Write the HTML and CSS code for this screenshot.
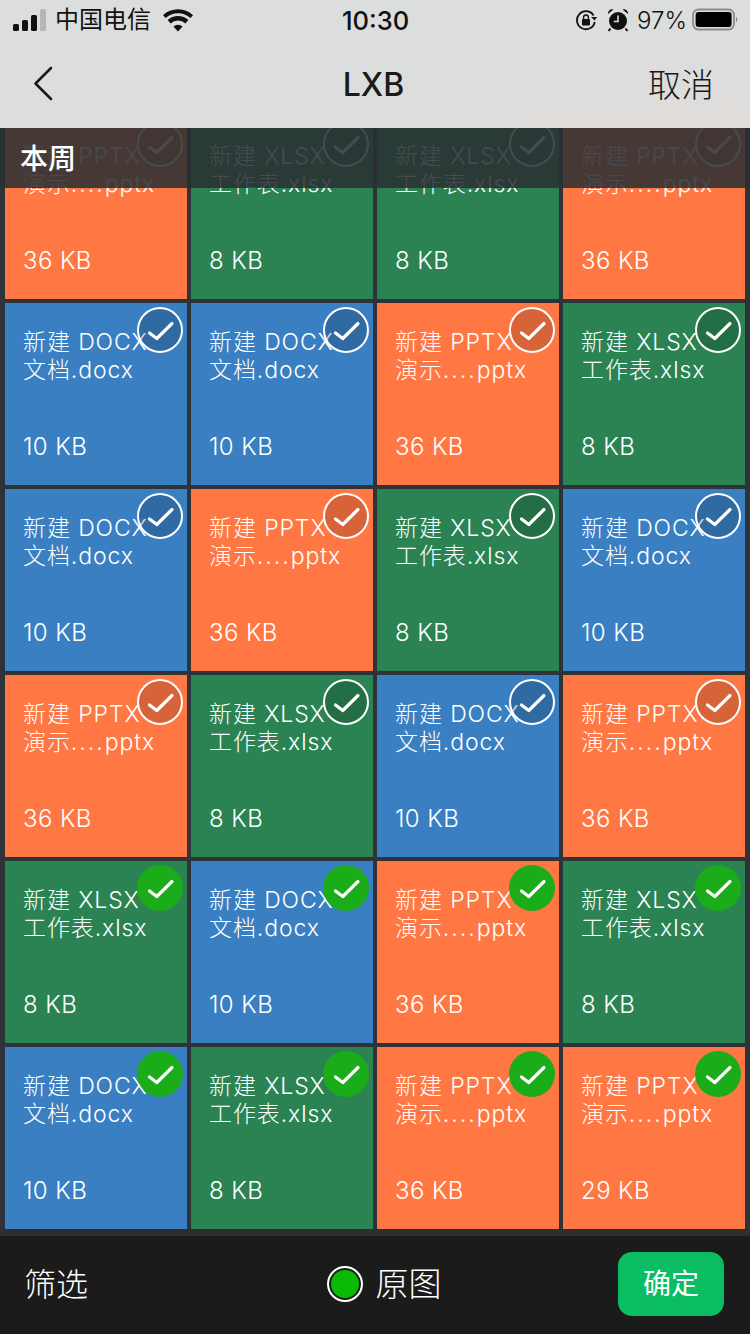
FILE: index.html
```html
<!DOCTYPE html>
<html lang="zh">
<head>
<meta charset="utf-8">
<title>LXB</title>
<link rel="stylesheet" href="styles.css">
</head>
<body>
<svg class="defs" width="0" height="0" aria-hidden="true">
  <symbol id="tick" viewBox="0 0 46 46"><path d="M12.5 26 L19.8 31.5 L35 16.5" fill="none" stroke="#fff" stroke-width="3.2" stroke-linecap="round" stroke-linejoin="round"/></symbol>
</svg>
<div class="page">
  <header class="top">
    <div class="status">
      <div class="status-left">
        <svg class="signal" width="34" height="22" viewBox="0 0 34 22"><rect x="0" y="15" width="6" height="7" rx="1.5" fill="#111"/><rect x="9" y="11" width="6" height="11" rx="1.5" fill="#111"/><rect x="18" y="6" width="6" height="16" rx="1.5" fill="#111"/><rect x="27" y="0" width="6" height="22" rx="1.5" fill="#b5b7b7"/></svg>
        <span class="carrier">中国电信</span>
        <svg class="wifi" width="30" height="23" viewBox="0 0 30 23"><path d="M15 22.5 L10.4 17.4 A7 7 0 0 1 19.6 17.4 Z M7.6 14.4 L4.6 11.1 A15.5 15.5 0 0 1 25.4 11.1 L22.4 14.4 A11 11 0 0 0 7.6 14.4 Z M2.6 9 L0 6.2 A22 22 0 0 1 30 6.2 L27.4 9 A18.4 18.4 0 0 0 2.6 9 Z" fill="#111"/></svg>
      </div>
      <span class="time">10:30</span>
      <div class="status-right">
        <svg class="rotate" width="22" height="22" viewBox="0 0 22 22"><path d="M18.6 6.4 A9 9 0 1 0 19.8 13" fill="none" stroke="#111" stroke-width="1.8"/><path d="M16 8 L22 8 L19.6 11.6 Z" fill="#111"/><rect x="7" y="10" width="8" height="6.5" rx="1" fill="#111"/><path d="M8.6 10 V8.4 A2.4 2.4 0 0 1 13.4 8.4 V10" fill="none" stroke="#111" stroke-width="1.4"/></svg>
        <svg class="alarm" width="22" height="24" viewBox="0 0 22 24"><circle cx="11" cy="13" r="9" fill="#111"/><path d="M1 6 A4 4 0 0 1 6.5 1.6 Z M21 6 A4 4 0 0 0 15.5 1.6 Z" fill="#111"/><path d="M3.5 20.5 L1.5 23 M18.5 20.5 L20.5 23" stroke="#111" stroke-width="2"/><path d="M11 7.5 V13.5 H6.8" fill="none" stroke="#dcdddd" stroke-width="1.6"/></svg>
        <span class="battery-text">97%</span>
        <svg width="46" height="24" viewBox="0 0 46 24"><rect x="1" y="1.5" width="41" height="20" rx="5.5" fill="none" stroke="#8b8d8d" stroke-width="1.8"/><rect x="3.6" y="4" width="36" height="15" rx="3" fill="#000"/><path d="M44 8.5 A4 4 0 0 1 44 14.5 Z" fill="#8b8d8d"/></svg>
      </div>
    </div>
    <nav class="nav">
      <svg class="back" width="20" height="36" viewBox="0 0 20 36"><path d="M18 2 L2.5 17.5 L18 33" fill="none" stroke="#1a1a1a" stroke-width="2.6" stroke-linecap="round" stroke-linejoin="round"/></svg>
      <span class="title">LXB</span>
      <span class="cancel">取消</span>
    </nav>
  </header>
  <div class="section-label">本周</div>
  <main class="grid">
    <div class="cell ppt"><p class="name">新建 PPTX<br>演示<span class="dots">....</span>pptx</p><p class="size">36 KB</p><span class="check"><svg width="46" height="46"><use href="#tick"/></svg></span></div>
    <div class="cell xls"><p class="name">新建 XLSX<br>工作表.xlsx</p><p class="size">8 KB</p><span class="check"><svg width="46" height="46"><use href="#tick"/></svg></span></div>
    <div class="cell xls"><p class="name">新建 XLSX<br>工作表.xlsx</p><p class="size">8 KB</p><span class="check"><svg width="46" height="46"><use href="#tick"/></svg></span></div>
    <div class="cell ppt"><p class="name">新建 PPTX<br>演示<span class="dots">....</span>pptx</p><p class="size">36 KB</p><span class="check"><svg width="46" height="46"><use href="#tick"/></svg></span></div>

    <div class="cell doc"><p class="name">新建 DOCX<br>文档.docx</p><p class="size">10 KB</p><span class="check"><svg width="46" height="46"><use href="#tick"/></svg></span></div>
    <div class="cell doc"><p class="name">新建 DOCX<br>文档.docx</p><p class="size">10 KB</p><span class="check"><svg width="46" height="46"><use href="#tick"/></svg></span></div>
    <div class="cell ppt"><p class="name">新建 PPTX<br>演示<span class="dots">....</span>pptx</p><p class="size">36 KB</p><span class="check"><svg width="46" height="46"><use href="#tick"/></svg></span></div>
    <div class="cell xls"><p class="name">新建 XLSX<br>工作表.xlsx</p><p class="size">8 KB</p><span class="check"><svg width="46" height="46"><use href="#tick"/></svg></span></div>

    <div class="cell doc"><p class="name">新建 DOCX<br>文档.docx</p><p class="size">10 KB</p><span class="check"><svg width="46" height="46"><use href="#tick"/></svg></span></div>
    <div class="cell ppt"><p class="name">新建 PPTX<br>演示<span class="dots">....</span>pptx</p><p class="size">36 KB</p><span class="check"><svg width="46" height="46"><use href="#tick"/></svg></span></div>
    <div class="cell xls"><p class="name">新建 XLSX<br>工作表.xlsx</p><p class="size">8 KB</p><span class="check"><svg width="46" height="46"><use href="#tick"/></svg></span></div>
    <div class="cell doc"><p class="name">新建 DOCX<br>文档.docx</p><p class="size">10 KB</p><span class="check"><svg width="46" height="46"><use href="#tick"/></svg></span></div>

    <div class="cell ppt"><p class="name">新建 PPTX<br>演示<span class="dots">....</span>pptx</p><p class="size">36 KB</p><span class="check"><svg width="46" height="46"><use href="#tick"/></svg></span></div>
    <div class="cell xls"><p class="name">新建 XLSX<br>工作表.xlsx</p><p class="size">8 KB</p><span class="check"><svg width="46" height="46"><use href="#tick"/></svg></span></div>
    <div class="cell doc"><p class="name">新建 DOCX<br>文档.docx</p><p class="size">10 KB</p><span class="check"><svg width="46" height="46"><use href="#tick"/></svg></span></div>
    <div class="cell ppt"><p class="name">新建 PPTX<br>演示<span class="dots">....</span>pptx</p><p class="size">36 KB</p><span class="check"><svg width="46" height="46"><use href="#tick"/></svg></span></div>

    <div class="cell xls"><p class="name">新建 XLSX<br>工作表.xlsx</p><p class="size">8 KB</p><span class="check on"><svg width="46" height="46"><use href="#tick"/></svg></span></div>
    <div class="cell doc"><p class="name">新建 DOCX<br>文档.docx</p><p class="size">10 KB</p><span class="check on"><svg width="46" height="46"><use href="#tick"/></svg></span></div>
    <div class="cell ppt"><p class="name">新建 PPTX<br>演示<span class="dots">....</span>pptx</p><p class="size">36 KB</p><span class="check on"><svg width="46" height="46"><use href="#tick"/></svg></span></div>
    <div class="cell xls"><p class="name">新建 XLSX<br>工作表.xlsx</p><p class="size">8 KB</p><span class="check on"><svg width="46" height="46"><use href="#tick"/></svg></span></div>

    <div class="cell doc"><p class="name">新建 DOCX<br>文档.docx</p><p class="size">10 KB</p><span class="check on"><svg width="46" height="46"><use href="#tick"/></svg></span></div>
    <div class="cell xls"><p class="name">新建 XLSX<br>工作表.xlsx</p><p class="size">8 KB</p><span class="check on"><svg width="46" height="46"><use href="#tick"/></svg></span></div>
    <div class="cell ppt"><p class="name">新建 PPTX<br>演示<span class="dots">....</span>pptx</p><p class="size">36 KB</p><span class="check on"><svg width="46" height="46"><use href="#tick"/></svg></span></div>
    <div class="cell ppt"><p class="name">新建 PPTX<br>演示<span class="dots">....</span>pptx</p><p class="size">29 KB</p><span class="check on"><svg width="46" height="46"><use href="#tick"/></svg></span></div>
  </main>
  <footer class="bar">
    <span class="filter">筛选</span>
    <div class="original"><span class="radio"></span><span class="original-text">原图</span></div>
    <button class="ok">确定</button>
  </footer>
</div>
</body>
</html>
```

FILE: styles.css
```css
* { box-sizing: border-box; }
html, body { margin: 0; padding: 0; }
body {
  width: 750px;
  height: 1334px;
  overflow: hidden;
  font-family: Inter, "Noto Sans CJK SC", sans-serif;
  background: #2d3338;
}
.defs { position: absolute; }
.page {
  position: relative;
  width: 750px;
  height: 1334px;
  display: flex;
  flex-direction: column;
  overflow: hidden;
}
.top {
  position: absolute;
  top: 0;
  left: 0;
  width: 100%;
  height: 128px;
  z-index: 3;
  background: linear-gradient(175deg, #dcdedd 0%, #dcdddd 60%, #e0dcd9 100%);
  color: #1a1a1a;
}
.status {
  height: 40px;
  padding: 0 12px 0 13px;
  display: grid;
  grid-template-columns: 1fr auto 1fr;
  align-items: center;
}
.status-left { display: flex; align-items: center; gap: 8px; }
.carrier { font-size: 24px; line-height: 40px; color: #111; margin-right: 4px; }
.time { font-size: 25.5px; font-weight: 500; color: #111; }
.status-right { display: flex; align-items: center; justify-content: flex-end; gap: 7px; }
.rotate { margin-right: 3px; }
.alarm { margin-right: 1px; }
.battery-text { font-size: 24px; font-weight: 300; color: #111; margin-right: -2px; }
.nav {
  height: 88px;
  padding: 0 36px 0 33px;
  display: grid;
  grid-template-columns: 1fr auto 1fr;
  align-items: center;
}
.back { display: block; }
.title { font-size: 32px; font-weight: 500; color: #1a1a1a; }
.cancel { font-size: 33px; font-weight: 300; color: #1a1a1a; justify-self: end; padding-bottom: 3px; }
.section-label {
  position: absolute;
  top: 128px;
  left: 0;
  width: 100%;
  height: 60px;
  z-index: 2;
  padding: 0 0 3px 20px;
  display: flex;
  align-items: center;
  font-size: 28px;
  font-weight: 500;
  color: #fff;
  background: rgba(42, 47, 50, 0.87);
}
.grid {
  padding: 117px 5px 0;
  display: grid;
  grid-template-columns: repeat(4, 182px);
  grid-auto-rows: 182px;
  gap: 4px;
}
.cell {
  position: relative;
  padding: 25px 0 0 18px;
  color: #fff;
  font-weight: 300;
  overflow: hidden;
}
.ppt { background: #ff7843; }
.xls { background: #2b8354; }
.doc { background: #3a7fc1; }
.name {
  margin: 0;
  font-size: 23px;
  line-height: 28px;
  letter-spacing: 0.9px;
  white-space: nowrap;
}
.dots { letter-spacing: 2px; }
.size {
  margin: 0;
  position: absolute;
  left: 18px;
  top: 128px;
  font-size: 24px;
  line-height: 32px;
  letter-spacing: 0.4px;
}
.check {
  position: absolute;
  top: 4px;
  right: 4px;
  width: 46px;
  height: 46px;
  border-radius: 50%;
  border: 2px solid #fff;
  background: rgba(0, 0, 0, 0.16);
}
.check svg { display: block; margin: -2px; }
.check.on { border: 0; background: #1aad19; }
.check.on svg { margin: 0; }
.bar {
  margin-top: 7px;
  flex: 1;
  background: #1b1b1b;
  color: #fff;
  padding: 0 26px 2px 24px;
  display: grid;
  grid-template-columns: 1fr auto 1fr;
  align-items: center;
  box-shadow: 0 -7px 0 #2e2e2e;
}
.filter { font-size: 32px; font-weight: 300; margin-bottom: 4px; }
.original { display: flex; align-items: center; gap: 13px; margin-left: 20px; }
.radio {
  width: 36px;
  height: 36px;
  border-radius: 50%;
  border: 2px solid #fff;
  background: #09bb07;
  box-shadow: inset 0 0 0 2px #1b1b1b;
}
.original-text { font-size: 33px; font-weight: 300; margin-bottom: 4px; }
.ok {
  justify-self: end;
  width: 106px;
  height: 64px;
  padding: 0 0 4px;
  border: 0;
  border-radius: 14px;
  background: #0abc62;
  color: #fff;
  font-family: inherit;
  font-size: 28px;
  font-weight: 400;
}
```
